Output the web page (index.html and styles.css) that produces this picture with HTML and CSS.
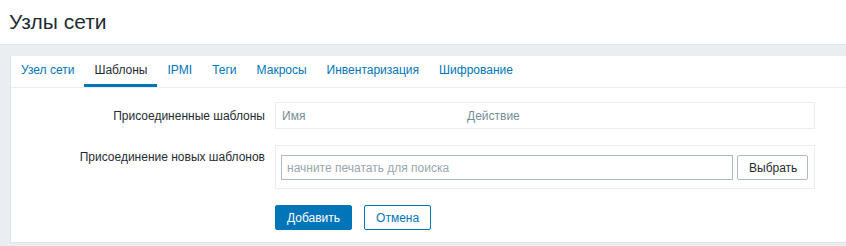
FILE: index.html
```html
<!DOCTYPE html>
<html lang="ru">
<head>
  <meta charset="UTF-8">
  <title>Узлы сети</title>
  <link rel="stylesheet" href="styles.css">
</head>
<body>

  <header class="page-header">
    <h1>Узлы сети</h1>
  </header>

  <main class="wrapper">
    <div class="card">
      <ul class="tabs">
        <li><a href="#">Узел сети</a></li>
        <li class="active"><a href="#">Шаблоны</a></li>
        <li><a href="#">IPMI</a></li>
        <li><a href="#">Теги</a></li>
        <li><a href="#">Макросы</a></li>
        <li><a href="#">Инвентаризация</a></li>
        <li><a href="#">Шифрование</a></li>
      </ul>

      <div class="form-grid">
        <div class="form-label">Присоединенные шаблоны</div>
        <div class="form-field">
          <div class="linked-table">
            <span class="col-name">Имя</span>
            <span class="col-action">Действие</span>
          </div>
        </div>

        <div class="form-label label-top">Присоединение новых шаблонов</div>
        <div class="form-field">
          <div class="select-box">
            <input type="text" class="search" placeholder="начните печатать для поиска">
            <button class="btn-grey">Выбрать</button>
          </div>
        </div>

        <div></div>
        <div class="form-actions">
          <button class="btn-primary">Добавить</button>
          <button class="btn-alt">Отмена</button>
        </div>
      </div>
    </div>
  </main>

</body>
</html>
```

FILE: styles.css
```css
body {
  margin: 0;
  font-family: 'Liberation Sans', Arial, sans-serif;
  font-size: 12px;
  color: #1f2c33;
  background: #ebeef0;
}

.page-header {
  background: #fff;
  height: 44px;
  border-bottom: 1px solid #dfe4e7;
  padding: 0 9px;
  display: flex;
  align-items: center;
}

.page-header h1 {
  margin: 0;
  font-size: 21px;
  font-weight: normal;
  line-height: 24px;
}

.wrapper {
  padding: 11px 0 5px 10px;
}

.card {
  background: #fff;
  border-left: 1px solid #dfe4e7;
  border-bottom: 1px solid #dfe4e7;
  padding-bottom: 12px;
}

.tabs {
  list-style: none;
  margin: 0;
  padding: 0;
  display: flex;
  border-bottom: 1px solid #ebeef0;
}

.tabs li a {
  display: block;
  padding: 0 10px;
  line-height: 28px;
  border-bottom: 3px solid transparent;
  color: #0275b8;
  text-decoration: none;
}

.tabs li.active a {
  color: #1f2c33;
  border-bottom-color: #0275b8;
}

.form-grid {
  display: grid;
  grid-template-columns: 264px 540px;
  row-gap: 16px;
  padding-top: 14px;
}

.form-label {
  text-align: right;
  padding-right: 10px;
  align-self: center;
}

.form-label.label-top {
  align-self: start;
  padding-top: 5px;
}

.linked-table {
  border: 1px solid #ebeef0;
  height: 25px;
  display: flex;
  align-items: center;
  color: #768d99;
}

.col-name {
  width: 185px;
  padding-left: 6px;
}

.select-box {
  border: 1px solid #ebeef0;
  padding: 9px 6px 8px 5px;
  display: flex;
  gap: 4px;
}

.search {
  flex: 1;
  height: 25px;
  box-sizing: border-box;
  border: 1px solid #acbbc2;
  padding: 0 5px;
  font-family: inherit;
  font-size: 12px;
  color: #1f2c33;
}

.search::placeholder {
  color: #9aa6ad;
}

button {
  font-family: inherit;
  font-size: 12px;
  height: 25px;
  padding: 0 11px;
  border-radius: 2px;
  cursor: pointer;
}

.btn-grey {
  width: 71px;
  background: #fff;
  border: 1px solid #acbbc2;
  color: #1f2c33;
}

.form-actions {
  display: flex;
  gap: 12px;
}

.btn-primary {
  background: #0275b8;
  border: 1px solid #0275b8;
  color: #fff;
}

.btn-alt {
  background: #fff;
  border: 1px solid #0275b8;
  color: #0275b8;
}
```
